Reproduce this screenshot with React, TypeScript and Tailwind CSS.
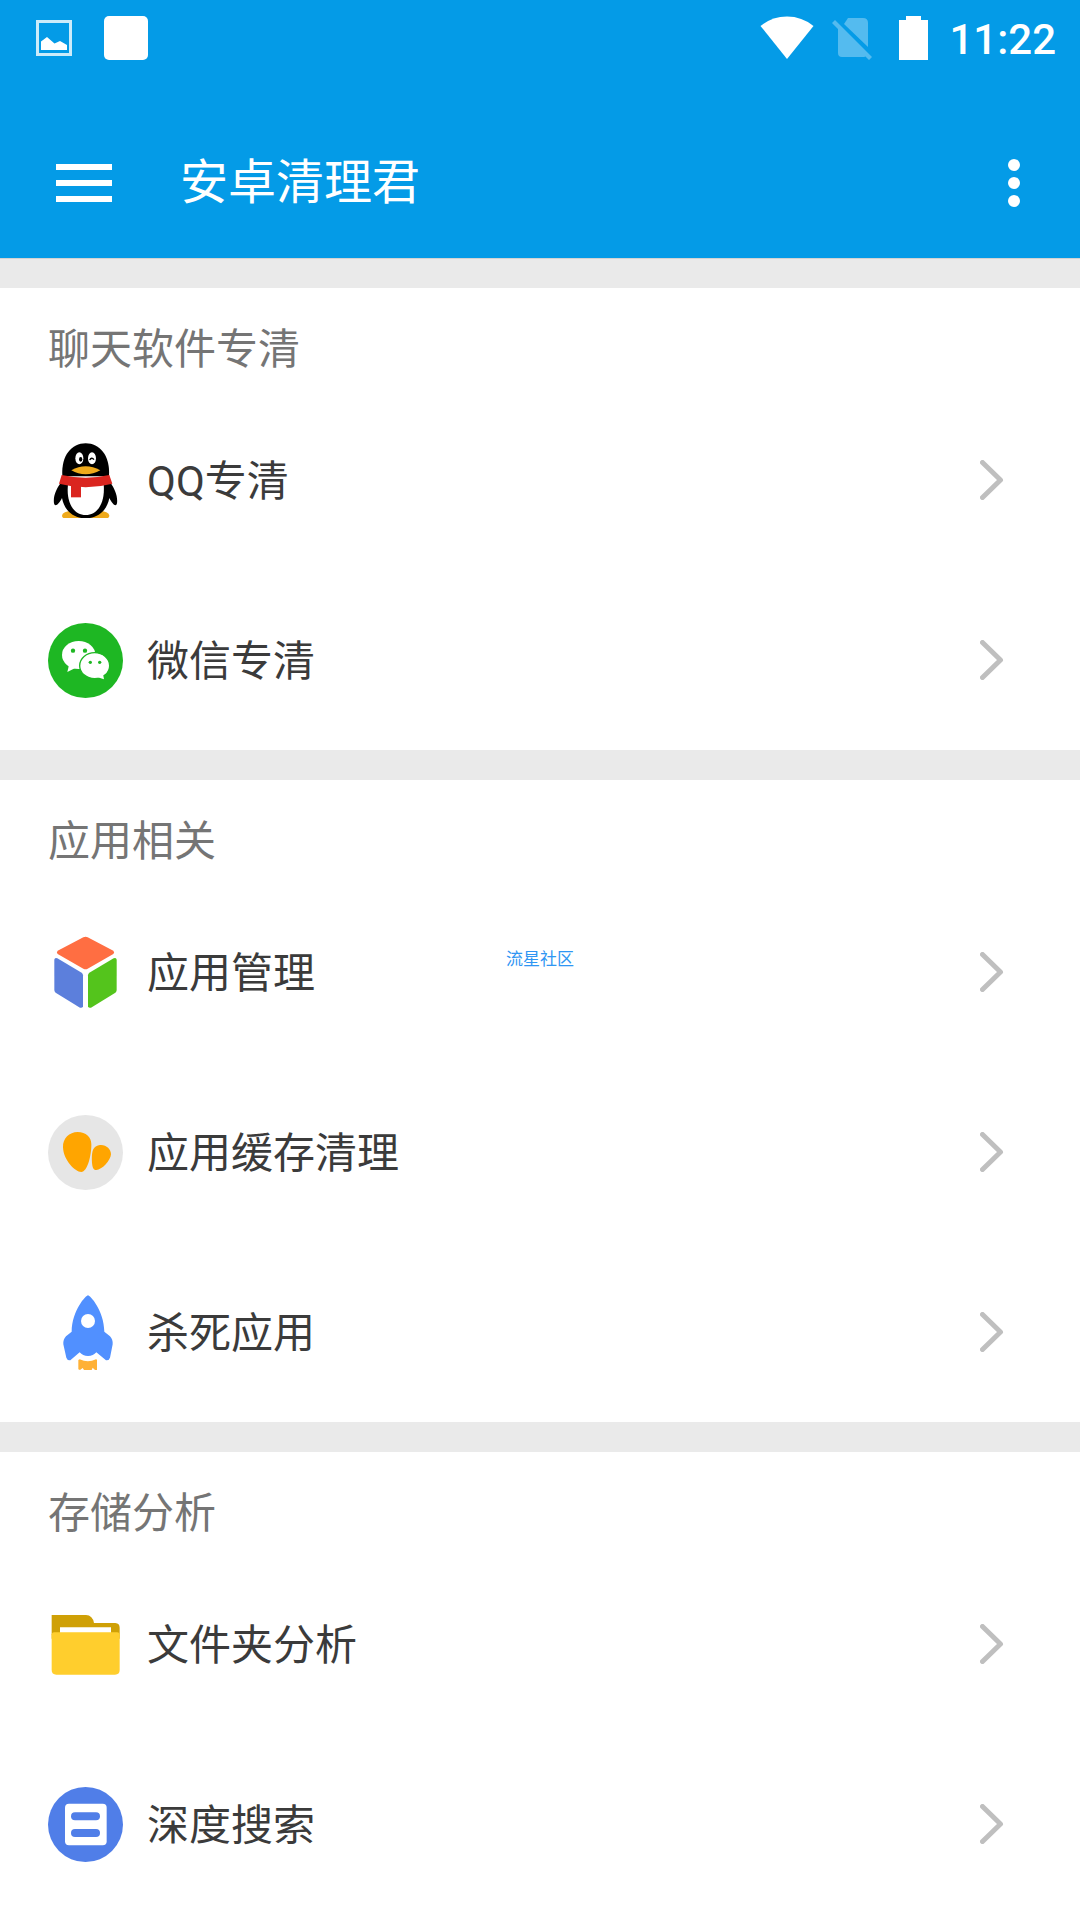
import React from "react";

interface Item {
    label: string;
    icon: React.ReactNode;
}

interface SectionProps {
    title: string;
    items: Item[];
    className?: string;
}

const QQIcon = () => (
    <svg className="size-[75px]" viewBox="54 68 225 225" aria-hidden="true">
        <ellipse cx="126" cy="286" rx="30" ry="14" fill="#efaa1c" />
        <ellipse cx="208" cy="286" rx="30" ry="14" fill="#efaa1c" />
        <path d="M97 168C93 105 125 69 167 69S241 105 237 168Z" />
        <path d="M92 188C79 205 69 228 72 249C75 263 88 249 96 233C103 272 132 294 167 294S231 272 238 233C246 249 258 263 261 249C264 228 254 205 242 188Z" />
        <path d="M114 192C108 246 130 284 167 284S226 246 221 192Z" fill="#fff" />
        <path d="M95 164Q167 180 238 164L247 190Q167 211 87 190Z" fill="#da251f" />
        <path d="M123 194H153V231H123Z" fill="#da251f" />
        <path d="M124 150Q145 138 167 138T211 150Q190 162 167 162T124 150Z" fill="#efaa1c" />
        <ellipse cx="148" cy="114" rx="12" ry="18" fill="#fff" />
        <ellipse cx="186" cy="114" rx="12" ry="18" fill="#fff" />
        <ellipse cx="152" cy="117" rx="5" ry="7" />
        <path d="M179 119Q185 109 192 118" fill="none" stroke="#000" strokeWidth="4" />
    </svg>
);

const WechatIcon = () => (
    <svg className="size-[75px]" viewBox="54 609 225 225" aria-hidden="true">
        <circle cx="166.5" cy="721.5" r="112.5" fill="#1eb723" />
        <ellipse cx="146" cy="705" rx="50" ry="42" fill="#fff" />
        <path d="M117 735L112 756L136 744Z" fill="#fff" />
        <circle cx="129" cy="692" r="6.5" fill="#1eb723" />
        <circle cx="165" cy="692" r="6.5" fill="#1eb723" />
        <ellipse cx="194" cy="737" rx="45" ry="39" fill="#fff" stroke="#1eb723" strokeWidth="4" />
        <path d="M203 772L222 778L219 762Z" fill="#fff" />
        <circle cx="181" cy="727" r="5" fill="#1eb723" />
        <circle cx="209" cy="727" r="5" fill="#1eb723" />
    </svg>
);

const CubeIcon = () => (
    <svg className="size-[75px]" viewBox="54 44 225 225" aria-hidden="true">
        <path d="M160 51Q167 48 173 51L250 91Q255 96 250 101L173 145Q167 149 160 145L83 101Q78 96 83 91Z" fill="#ff6e42" />
        <path d="M73 118Q74 111 82 114L155 157Q159 160 159 165V258Q157 264 150 262L77 217Q73 214 73 209Z" fill="#5c7fdc" />
        <path d="M260 118Q259 111 251 114L178 157Q174 160 174 165V258Q176 264 183 262L256 217Q260 214 260 209Z" fill="#54c41c" />
    </svg>
);

const CacheIcon = () => (
    <svg className="size-[75px]" viewBox="54 585 225 225" aria-hidden="true">
        <circle cx="166.5" cy="697.5" r="112.5" fill="#e6e6e6" />
        <path d="M99 682C98 655 118 636 143 636C168 636 184 652 184 672C185 705 172 756 154 756C135 756 100 720 99 682Z" fill="#ffa500" />
        <path d="M186 728C185 708 186 696 190 688C195 678 205 675 213 675C230 675 243 688 243 703C242 722 215 750 199 750C189 750 187 740 186 728Z" fill="#ffa500" />
    </svg>
);

const RocketIcon = () => (
    <svg className="size-[75px]" viewBox="54 74 225 225" aria-hidden="true">
        <path
            d="M174 75C180 75 222 120 223 184L240 198Q249 207 248 222L240 262Q237 271 228 270L199 246Q190 257 174 257T149 246L121 270Q112 271 109 262L100 222Q99 207 108 198L125 184C126 120 168 75 174 75Z"
            fill="#5190ff"
        />
        <circle cx="174" cy="152" r="21" fill="#fff" />
        <path d="M149 267Q174 279 198 267L201 268V299H195L188 292L185 299H162L158 293L150 299L145 297V269Z" fill="#ffb136" />
    </svg>
);

const FolderIcon = () => (
    <svg className="size-[75px]" viewBox="54 50 225 225" aria-hidden="true">
        <path d="M65 74H168Q188 75 192 98H256Q269 99 269 112V145H65Z" fill="#cfa006" />
        <path d="M90 111H243V131H90Z" fill="#fff" />
        <path d="M65 132Q66 126 72 126H262Q268 126 269 132V239Q269 253 255 253H79Q65 253 65 239Z" fill="#ffce2d" />
    </svg>
);

const SearchIcon = () => (
    <svg className="size-[75px]" viewBox="54 590 225 225" aria-hidden="true">
        <circle cx="166.5" cy="702.5" r="112.5" fill="#507ee8" />
        <rect x="105" y="640" width="125" height="125" rx="12" fill="#fff" />
        <rect x="123" y="666" width="87" height="24" rx="12" fill="#507ee8" />
        <rect x="123" y="716" width="87" height="24" rx="12" fill="#507ee8" />
    </svg>
);

const StatusBar = () => (
    <div className="flex h-[72px] items-center pt-1 pl-9 pr-6">
        <svg className="size-9" viewBox="0 0 36 36" aria-hidden="true">
            <path d="M1.5 1.5H34.5V34.5H1.5Z" fill="none" stroke="#fff" strokeOpacity="0.8" strokeWidth="3" />
            <path d="M5 30V21.5L11 17L18.5 23.5L24 21L31 25V30Z" fill="#fff" />
        </svg>
        <div className="ml-8 size-11 rounded-[5px] bg-white" />
        <div className="ml-auto flex items-center">
            <svg className="h-11 w-[54px]" viewBox="0 0 54 44" aria-hidden="true">
                <path d="M0.5 10Q12 0.5 27 0.5T53.5 10L27 43Z" fill="#fff" />
            </svg>
            <svg className="ml-[18px] h-11 w-10" viewBox="0 0 40 44" fill="#fff" fillOpacity="0.32" aria-hidden="true">
                <path d="M16 2H31Q36 2 36 7V31L12 8Z" />
                <path d="M0 7L3 4L40 41L37 44L33.5 40.5Q32 41 31 41H10Q6 41 6 37V13Z" />
            </svg>
            <svg className="ml-[27px] h-11 w-[29px]" viewBox="0 0 29 44" aria-hidden="true">
                <path d="M7 0H22V4H29V44H0V4H7Z" fill="#fff" />
            </svg>
            <time className="ml-[21px] pt-1 text-[42px] leading-[44px] font-medium">11:22</time>
        </div>
    </div>
);

const Header = () => (
    <header className="h-[258px] bg-[#049be7] text-white">
        <StatusBar />
        <div className="flex h-[186px] items-center pt-9 pl-14 pr-15">
            <button className="flex w-14 flex-col gap-2.5" aria-label="菜单">
                <span className="h-1.5 w-full bg-white" />
                <span className="h-1.5 w-full bg-white" />
                <span className="h-1.5 w-full bg-white" />
            </button>
            <h1 className="ml-[68px] text-[48px] leading-[60px]">安卓清理君</h1>
            <button className="ml-auto flex flex-col gap-1.5" aria-label="更多">
                <span className="size-3 rounded-full bg-white" />
                <span className="size-3 rounded-full bg-white" />
                <span className="size-3 rounded-full bg-white" />
            </button>
        </div>
    </header>
);

const Section: React.FC<SectionProps> = ({ title, items, className = "" }) => (
    <section className={`bg-white ${className}`}>
        <h2 className="h-[102px] px-12 pt-[30px] text-[42px] leading-[64px] text-[#757575]">{title}</h2>
        {items.map((item) => (
            <button key={item.label} className="flex h-[180px] w-full items-center pl-12 pr-[76px] text-left">
                {item.icon}
                <span className="ml-6 pt-1 text-[42px] leading-[64px] text-[#3b3b3b]">{item.label}</span>
                <svg className="ml-auto h-10 w-6" viewBox="0 0 24 40" fill="none" aria-hidden="true">
                    <path d="M2.5 2.5L20.500 20L2.5 37.5" stroke="#bfbfbf" strokeWidth="5" strokeLinecap="round" strokeLinejoin="round" />
                </svg>
            </button>
        ))}
    </section>
);

const App = () => {
    const chatItems = [
        { label: "QQ专清", icon: <QQIcon /> },
        { label: "微信专清", icon: <WechatIcon /> },
    ];
    const appItems = [
        { label: "应用管理", icon: <CubeIcon /> },
        { label: "应用缓存清理", icon: <CacheIcon /> },
        { label: "杀死应用", icon: <RocketIcon /> },
    ];
    const storageItems = [
        { label: "文件夹分析", icon: <FolderIcon /> },
        { label: "深度搜索", icon: <SearchIcon /> },
    ];

    return (
        <div className="relative flex min-h-screen flex-col bg-[#eaeaea] font-['Roboto','Noto_Sans_CJK_SC',sans-serif]">
            <Header />
            <main className="flex grow flex-col gap-[30px] border-t border-[#d3d3d3] pt-[29px]">
                <Section title="聊天软件专清" items={chatItems} />
                <Section title="应用相关" items={appItems} />
                <Section title="存储分析" items={storageItems} className="grow" />
            </main>
            <div className="pointer-events-none absolute inset-0 flex items-center justify-center text-[17px] text-[#2f96f3]">
                流星社区
            </div>
        </div>
    );
};

export default App;
